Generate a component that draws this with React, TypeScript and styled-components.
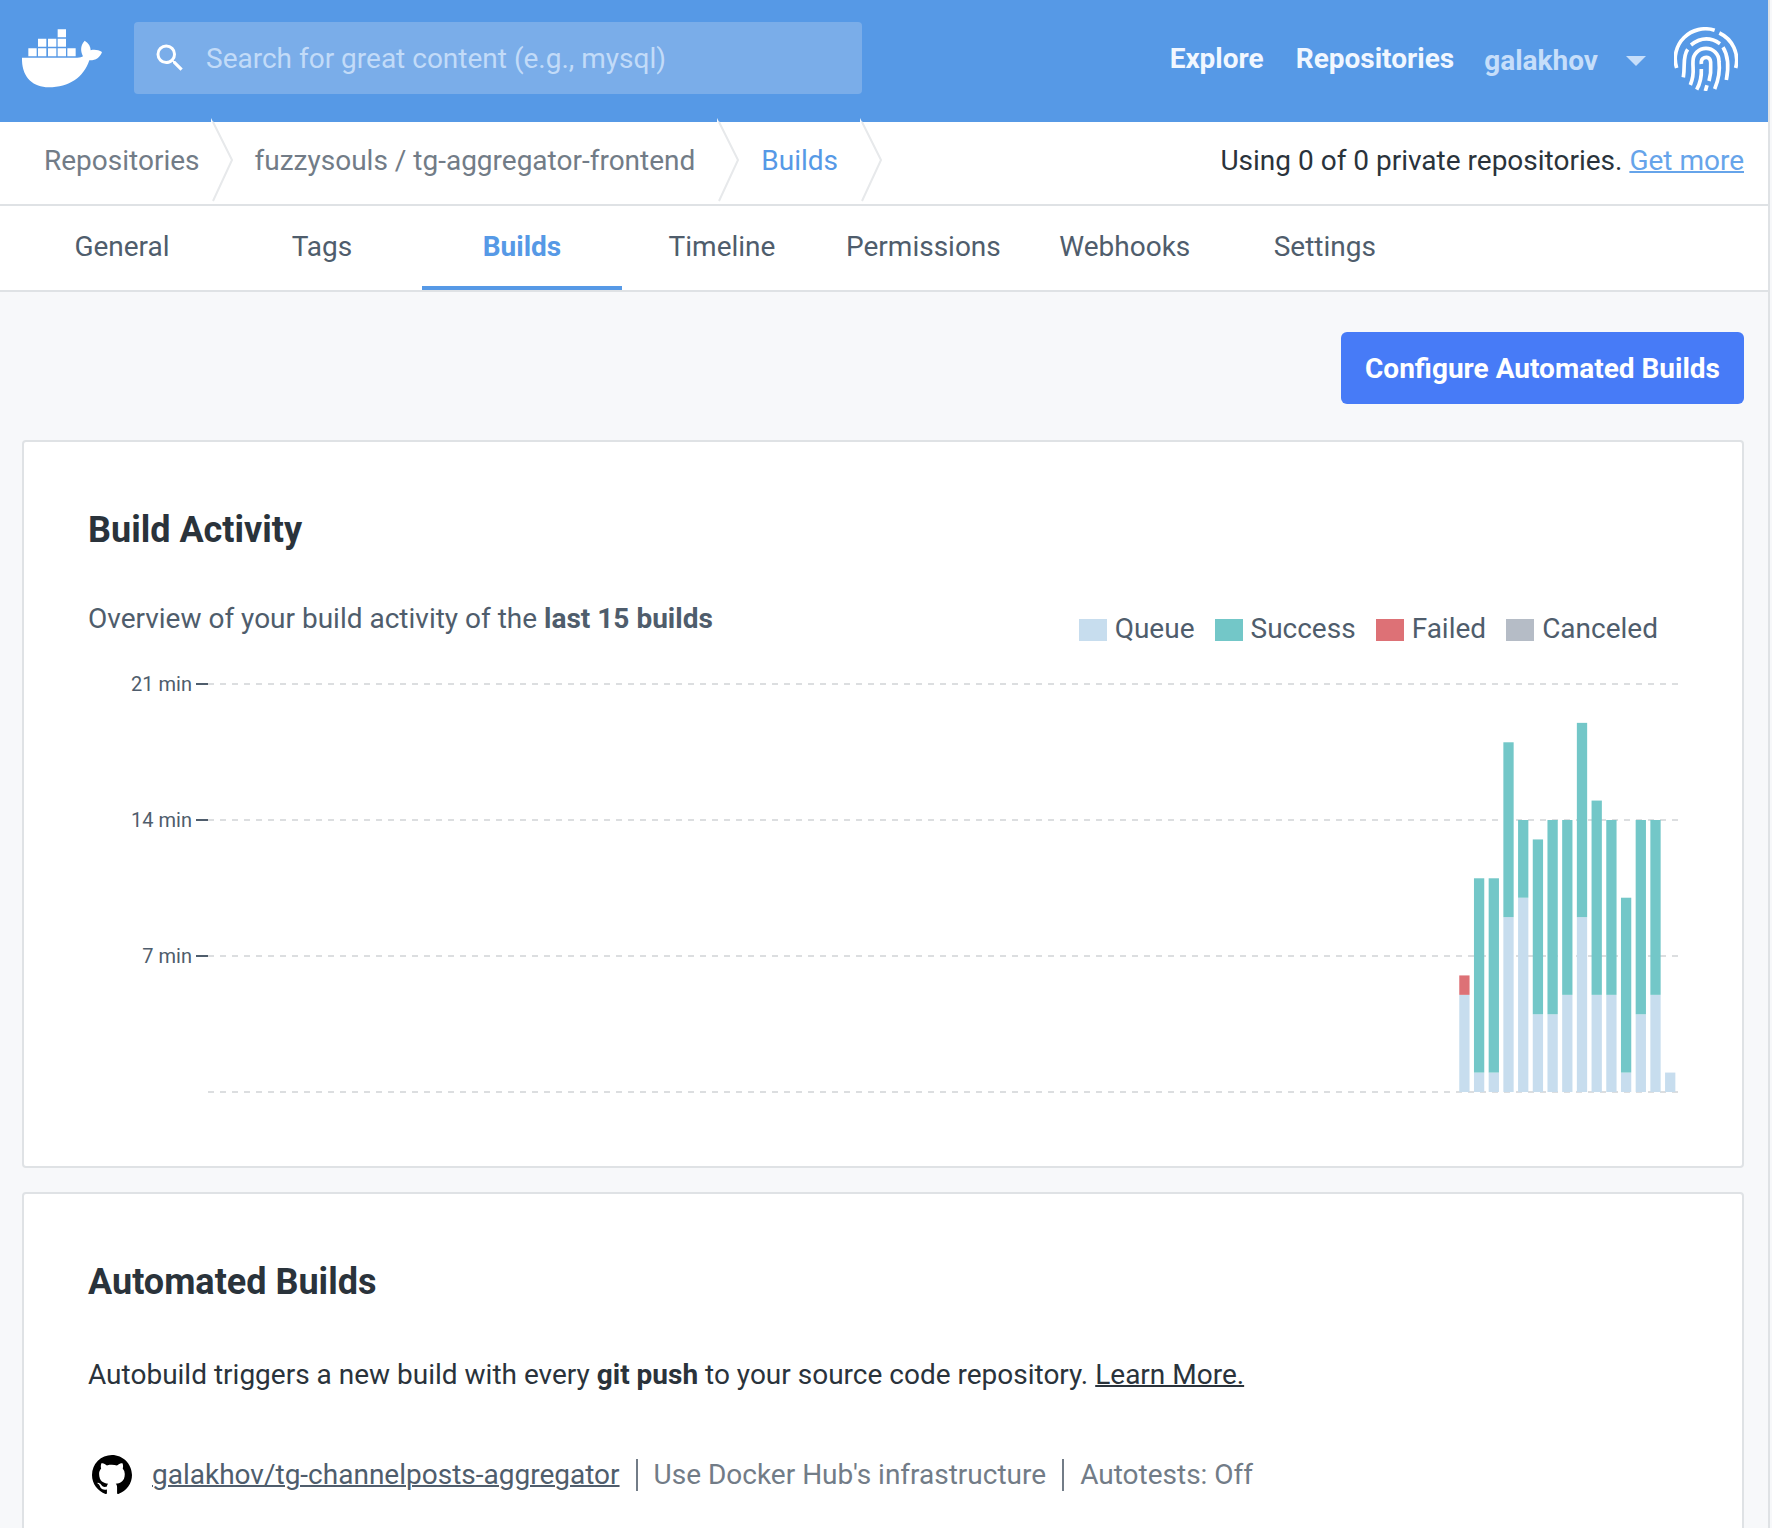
import React from "react";
import styled, { createGlobalStyle } from "styled-components";
import { MdSearch } from "react-icons/md";
import { VscGithubInverted } from "react-icons/vsc";

const color = {
  header: "#5699e6",
  link: "#5699e6",
  linkSoft: "#66a4ea",
  primary: "#477bf7",
  ink: "#2a333b",
  slate: "#4f5d6c",
  muted: "#727c87",
  border: "#dfe2e5",
  page: "#f7f8fa",
  queue: "#c7ddee",
  success: "#73c7c8",
  failed: "#dd7176",
  canceled: "#b5bcc6",
};

const GlobalStyle = createGlobalStyle`
  *, *::before, *::after { box-sizing: border-box; }
  body {
    margin: 0;
    background: ${color.page};
    color: ${color.ink};
    font-family: Roboto, "Liberation Sans", sans-serif;
    font-size: 28px;
    line-height: 42px;
  }
  button, input { font: inherit; }
  h2, p, ul, ol { margin: 0; padding: 0; }
  ul, ol { list-style: none; }
`;

const Shell = styled.div`
  min-height: 100vh;
  margin-right: 2px;
  border-right: 2px solid ${color.border};
`;

const Header = styled.header`
  display: flex;
  align-items: center;
  justify-content: space-between;
  gap: 40px;
  height: 122px;
  padding: 0 30px 6px 22px;
  background: ${color.header};
`;

const HeaderStart = styled.div`
  display: flex;
  flex: 1;
  align-items: center;
  gap: 32px;
`;

const LogoLink = styled.a`
  display: flex;
  flex: none;
  padding-top: 2px;
`;

const SearchBox = styled.label`
  display: flex;
  flex: 1;
  align-items: center;
  gap: 18px;
  max-width: 728px;
  height: 72px;
  padding: 0 18px;
  border-radius: 4px;
  background: #7aade9;
  color: #fff;
`;

const SearchInput = styled.input`
  flex: 1;
  min-width: 0;
  padding: 2px 0 0;
  border: 0;
  outline: 0;
  background: transparent;
  color: #fff;
  &::placeholder {
    color: #c2dbf8;
    opacity: 1;
  }
`;

const Nav = styled.nav`
  display: flex;
  align-items: center;
  gap: 28px;
  padding-top: 2px;
`;

const NavLinks = styled.div`
  display: flex;
  gap: 32px;
  padding-right: 2px;
`;

const NavLink = styled.a`
  color: #f1f7ff;
  font-weight: 700;
  text-decoration: none;
`;

const UserButton = styled.button`
  display: flex;
  align-items: center;
  gap: 28px;
  padding: 4px 0 0;
  border: 0;
  background: none;
  color: #c6defa;
  font-weight: 700;
`;

const AvatarButton = styled.button`
  display: flex;
  padding: 0;
  border: 0;
  background: none;
`;

const CrumbBar = styled.div`
  display: flex;
  align-items: center;
  justify-content: space-between;
  height: 84px;
  padding: 0 24px 4px 44px;
  border-bottom: 2px solid ${color.border};
  background: #fff;
`;

const Crumbs = styled.ol`
  display: flex;
  align-items: center;
  gap: 22px;
`;

const Crumb = styled.li<{ $tight?: boolean }>`
  display: flex;
  align-items: center;
  gap: ${(p) => (p.$tight ? 11 : 22)}px;
`;

const CrumbLink = styled.a<{ $active?: boolean }>`
  color: ${(p) => (p.$active ? color.link : color.muted)};
  text-decoration: none;
`;

const Chevron = styled.svg`
  flex: none;
  margin: -6px 0 -4px;
`;

const TextLink = styled.a<{ $tone: string }>`
  color: ${(p) => p.$tone};
  text-decoration: underline;
  text-decoration-thickness: 2px;
`;

const Tabs = styled.nav`
  display: flex;
  height: 86px;
  padding: 0 22px;
  border-bottom: 2px solid ${color.border};
  background: #fff;
`;

const Tab = styled.a<{ $active?: boolean }>`
  display: flex;
  align-items: center;
  justify-content: center;
  min-width: 200px;
  padding: 2px 24px 0;
  border-bottom: 4px solid ${(p) => (p.$active ? color.link : "transparent")};
  color: ${(p) => (p.$active ? color.link : color.slate)};
  font-weight: ${(p) => (p.$active ? 700 : 400)};
  text-decoration: none;
`;

const Main = styled.main`
  display: flex;
  flex-direction: column;
  gap: 24px;
  padding: 40px 24px 0 22px;
`;

const Actions = styled.div`
  display: flex;
  justify-content: flex-end;
  padding-bottom: 12px;
`;

const PrimaryButton = styled.button`
  height: 72px;
  padding: 2px 24px 0;
  border: 0;
  border-radius: 6px;
  background: ${color.primary};
  color: #fff;
  font-weight: 700;
`;

const Card = styled.section`
  padding: 64px;
  border: 2px solid ${color.border};
  border-radius: 4px;
  background: #fff;
`;

const CardTitle = styled.h2`
  font-size: 36px;
  line-height: 48px;
  font-weight: 700;
`;

const ActivityHead = styled.div`
  display: flex;
  align-items: flex-start;
  justify-content: space-between;
  padding: 44px 20px 0 0;
  color: ${color.slate};
`;

const Legend = styled.ul`
  display: flex;
  gap: 20px;
  padding-top: 10px;
`;

const LegendItem = styled.li`
  display: flex;
  align-items: center;
  gap: 8px;
`;

const Swatch = styled.span<{ $fill: string }>`
  width: 28px;
  height: 22px;
  margin-top: 2px;
  background: ${(p) => p.$fill};
`;

const Chart = styled.svg`
  display: block;
  width: 100%;
  font-size: 20px;
`;

const Intro = styled.p`
  padding-top: 48px;
`;

const SourceRow = styled.div`
  display: flex;
  align-items: center;
  gap: 16px;
  padding-top: 58px;
  color: ${color.muted};
`;

const SourceLink = styled.div`
  display: flex;
  align-items: center;
  gap: 20px;
  padding-left: 4px;
`;

const Divider = styled.span`
  width: 2px;
  height: 32px;
  background: ${color.muted};
`;

const tabs = ["General", "Tags", "Builds", "Timeline", "Permissions", "Webhooks", "Settings"];

const legend = [
  { label: "Queue", fill: color.queue },
  { label: "Success", fill: color.success },
  { label: "Failed", fill: color.failed },
  { label: "Canceled", fill: color.canceled },
];

type Build = { queue: number; run: number; failed?: boolean };

// Minutes spent queued and running, oldest build first.
const builds: Build[] = [
  { queue: 5, run: 1, failed: true },
  { queue: 1, run: 10 },
  { queue: 1, run: 10 },
  { queue: 9, run: 9 },
  { queue: 10, run: 4 },
  { queue: 4, run: 9 },
  { queue: 4, run: 10 },
  { queue: 5, run: 9 },
  { queue: 9, run: 10 },
  { queue: 5, run: 10 },
  { queue: 5, run: 9 },
  { queue: 1, run: 9 },
  { queue: 4, run: 10 },
  { queue: 5, run: 9 },
  { queue: 1, run: 0 },
];

const plot = { left: 120, right: 1590, top: 34, bottom: 442, slots: 100, max: 21 };

function BuildChart() {
  const slot = (plot.right - plot.left) / plot.slots;
  const bar = slot * 0.7;
  const y = (min: number) => plot.bottom - (min / plot.max) * (plot.bottom - plot.top);
  return (
    <Chart viewBox="0 0 1590 452" role="img" aria-label="Build activity">
      {[0, 7, 14, 21].map((min) => (
        <g key={min}>
          <path d={`M${plot.left} ${y(min)}H${plot.right}`} stroke="#dcdee0" strokeWidth={2} strokeDasharray="6 6" />
          {min > 0 && (
            <>
              <path d={`M${plot.left - 12} ${y(min)}h12`} stroke={color.slate} strokeWidth={2} />
              <text x={plot.left - 16} y={y(min) + 7} textAnchor="end" fill={color.slate}>
                {min} min
              </text>
            </>
          )}
        </g>
      ))}
      {builds.map((b, i) => {
        const x = plot.left + (plot.slots - builds.length + i + 0.12) * slot;
        return (
          <g key={i}>
            <rect x={x} y={y(b.queue)} width={bar} height={y(0) - y(b.queue)} fill={color.queue} />
            <rect
              x={x}
              y={y(b.queue + b.run)}
              width={bar}
              height={y(b.queue) - y(b.queue + b.run)}
              fill={b.failed ? color.failed : color.success}
            />
          </g>
        );
      })}
    </Chart>
  );
}

function DockerLogo() {
  return (
    <svg width="80" height="60" viewBox="66 86 240 180" fill="#fff" aria-hidden="true">
      <path d="M66 172H232C240 172 246 170 249 168C240 150 242 134 254 121C266 128 272 139 272 150C283 147 296 149 306 155C300 172 286 181 268 180C250 232 208 261 146 261C98 261 64 230 66 172Z" />
      <path d="M85 144h25v24h-25zM114 144h25v24h-25zM144 144h25v24h-25zM173 144h25v24h-25zM202 144h25v24h-25z" />
      <path d="M114 115h25v24h-25zM144 115h25v24h-25zM173 115h25v24h-25zM173 87h25v24h-25z" />
    </svg>
  );
}

function Fingerprint() {
  return (
    <svg width="64" height="64" viewBox="102 77 192 192" fill="none" stroke="#fff" strokeWidth="11" aria-hidden="true">
      <path d="M110 200A90 90 0 0 1 224 87" />
      <path d="M238 95A90 90 0 0 1 287 200" />
      <path d="M153 131Q196 97 240 127" />
      <path d="M143 144C127 166 136 192 130 228" />
      <path d="M249 138C266 165 266 200 259 236" />
      <path d="M151 251C166 215 157 205 159 180A39 39 0 0 1 237 180C240 205 236 235 224 263" />
      <path d="M184 188C182 172 192 168 199 168C212 168 213 182 212 195C214 215 211 225 207 239" />
      <path d="M184 203C185 226 182 244 170 265" />
      <path d="M201 252L196 269" />
    </svg>
  );
}

function CrumbChevron() {
  return (
    <Chevron width="22" height="84" viewBox="0 0 22 84" fill="none" aria-hidden="true">
      <path d="M0 0L21 42L2 83" fill="#fff" />
      <path d="M2 4L21 42L2 83" stroke="#e7e9eb" strokeWidth="2" />
    </Chevron>
  );
}

export default function App() {
  return (
    <>
      <GlobalStyle />
      <Shell>
        <Header>
          <HeaderStart>
            <LogoLink href="#" aria-label="Docker Hub">
              <DockerLogo />
            </LogoLink>
            <SearchBox>
              <MdSearch size={36} aria-hidden="true" />
              <SearchInput type="text" aria-label="Search" placeholder="Search for great content (e.g., mysql)" />
            </SearchBox>
          </HeaderStart>
          <Nav>
            <NavLinks>
              <NavLink href="#">Explore</NavLink>
              <NavLink href="#">Repositories</NavLink>
            </NavLinks>
            <UserButton type="button">
              galakhov
              <svg width="20" height="10" viewBox="0 0 20 10" fill="currentColor" aria-hidden="true">
                <path d="M0 0H20L10 10Z" />
              </svg>
            </UserButton>
            <AvatarButton type="button" aria-label="Account">
              <Fingerprint />
            </AvatarButton>
          </Nav>
        </Header>

        <CrumbBar>
          <Crumbs>
            <Crumb $tight>
              <CrumbLink href="#">Repositories</CrumbLink>
              <CrumbChevron />
            </Crumb>
            <Crumb>
              <CrumbLink href="#">fuzzysouls / tg-aggregator-frontend</CrumbLink>
              <CrumbChevron />
            </Crumb>
            <Crumb>
              <CrumbLink href="#" $active>
                Builds
              </CrumbLink>
              <CrumbChevron />
            </Crumb>
          </Crumbs>
          <p>
            Using 0 of 0 private repositories.{" "}
            <TextLink href="#" $tone={color.linkSoft}>
              Get more
            </TextLink>
          </p>
        </CrumbBar>

        <Tabs>
          {tabs.map((tab) => (
            <Tab key={tab} href="#" $active={tab === "Builds"}>
              {tab}
            </Tab>
          ))}
        </Tabs>

        <Main>
          <Actions>
            <PrimaryButton type="button">Configure Automated Builds</PrimaryButton>
          </Actions>

          <Card>
            <CardTitle>Build Activity</CardTitle>
            <ActivityHead>
              <p>
                Overview of your build activity of the <strong>last 15 builds</strong>
              </p>
              <Legend>
                {legend.map((item) => (
                  <LegendItem key={item.label}>
                    <Swatch $fill={item.fill} />
                    {item.label}
                  </LegendItem>
                ))}
              </Legend>
            </ActivityHead>
            <BuildChart />
          </Card>

          <Card>
            <CardTitle>Automated Builds</CardTitle>
            <Intro>
              Autobuild triggers a new build with every <strong>git push</strong> to your source code repository.{" "}
              <TextLink href="#" $tone={color.ink}>
                Learn More.
              </TextLink>
            </Intro>
            <SourceRow>
              <SourceLink>
                <VscGithubInverted size={40} color="#000" aria-hidden="true" />
                <TextLink href="#" $tone={color.slate}>
                  galakhov/tg-channelposts-aggregator
                </TextLink>
              </SourceLink>
              <Divider />
              <span>Use Docker Hub's infrastructure</span>
              <Divider />
              <span>Autotests: Off</span>
            </SourceRow>
          </Card>
        </Main>
      </Shell>
    </>
  );
}
